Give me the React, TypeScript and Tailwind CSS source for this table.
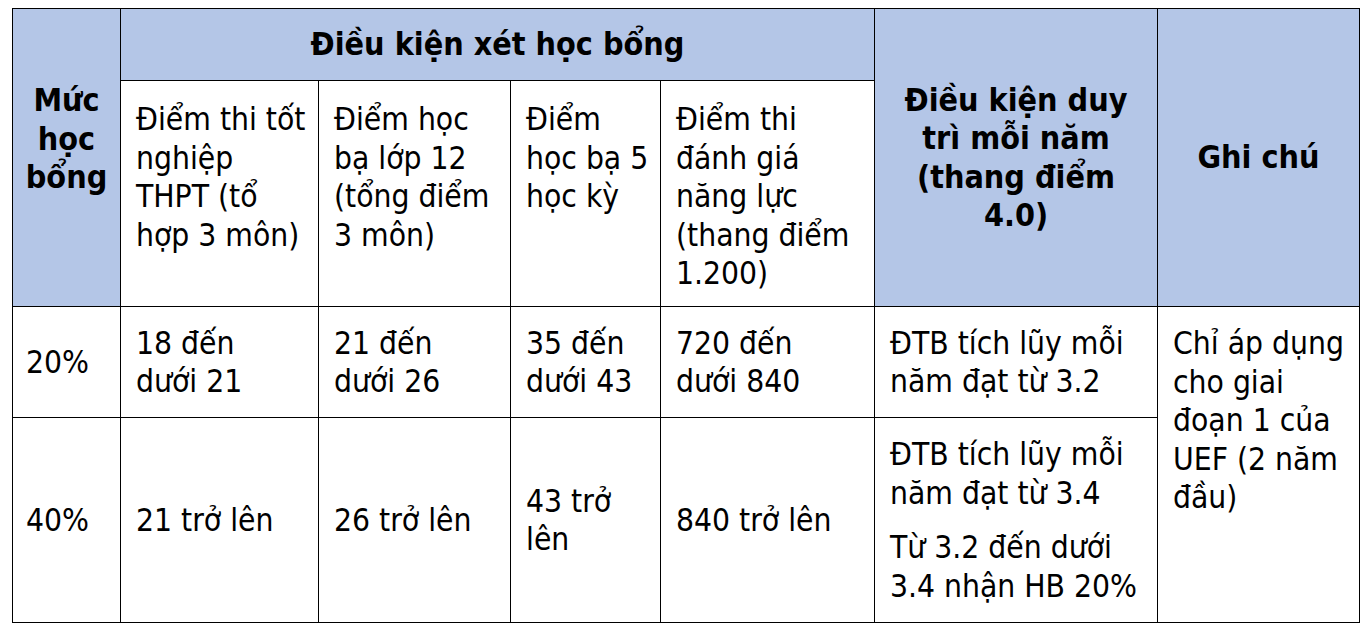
import React from "react";

const F = {
  fontFamily: '"DejaVu Sans Condensed", "DejaVu Sans", Verdana, sans-serif',
};

export default function App() {
  const td = "border border-black align-middle pl-[15px] pr-[4px] text-left whitespace-nowrap";
  const th2 = "border border-black align-top pt-[19px] pl-[15px] pr-[4px] text-left whitespace-nowrap";
  return (
    <div className="w-[1370px] h-[632px] bg-white pt-[8px] pl-[12px]">
      <table
        className="table-fixed border-collapse text-[31.5px] leading-[38.5px] text-black font-stretch-condensed"
        style={{ ...F, width: 1347 }}
      >
        <colgroup>
          <col style={{ width: 108 }} />
          <col style={{ width: 198 }} />
          <col style={{ width: 192 }} />
          <col style={{ width: 150 }} />
          <col style={{ width: 214 }} />
          <col style={{ width: 283 }} />
          <col style={{ width: 202 }} />
        </colgroup>
        <tbody>
          <tr className="h-[72px]">
            <td
              rowSpan={2}
              className="border border-black bg-[#b4c6e7] align-top pt-[72px] text-center font-bold px-0 text-[32px] whitespace-nowrap"
            >
              Mức
              <br />
              học
              <br />
              bổng
            </td>
            <td
              colSpan={4}
              className="border border-black bg-[#b4c6e7] align-middle text-center font-bold text-[32px] whitespace-nowrap"
            >
              Điều kiện xét học bổng
            </td>
            <td
              rowSpan={2}
              className="border border-black bg-[#b4c6e7] align-middle text-center font-bold px-[8px] text-[32px] whitespace-nowrap"
            >
              Điều kiện duy
              <br />
              trì mỗi năm
              <br />
              (thang điểm
              <br />
              4.0)
            </td>
            <td
              rowSpan={2}
              className="border border-black bg-[#b4c6e7] align-middle text-center font-bold text-[32px] whitespace-nowrap"
            >
              Ghi chú
            </td>
          </tr>
          <tr className="h-[226px]">
            <td className={th2}>
              Điểm thi tốt
              <br />
              nghiệp
              <br />
              THPT (tổ
              <br />
              hợp 3 môn)
            </td>
            <td className={th2}>
              Điểm học
              <br />
              bạ lớp 12
              <br />
              (tổng điểm
              <br />
              3 môn)
            </td>
            <td className={th2}>
              Điểm
              <br />
              học bạ 5
              <br />
              học kỳ
            </td>
            <td className={th2}>
              Điểm thi
              <br />
              đánh giá
              <br />
              năng lực
              <br />
              (thang điểm
              <br />
              1.200)
            </td>
          </tr>
          <tr className="h-[111px]">
            <td className="border border-black align-middle pl-[13px] pr-0 whitespace-nowrap">20%</td>
            <td className={td}>
              18 đến
              <br />
              dưới 21
            </td>
            <td className={td}>
              21 đến
              <br />
              dưới 26
            </td>
            <td className={td}>
              35 đến
              <br />
              dưới 43
            </td>
            <td className={td}>
              720 đến
              <br />
              dưới 840
            </td>
            <td className={td}>
              ĐTB tích lũy mỗi
              <br />
              năm đạt từ 3.2
            </td>
            <td
              rowSpan={2}
              className="border border-black align-top pt-[17px] pl-[15px] pr-[4px] whitespace-nowrap"
            >
              Chỉ áp dụng
              <br />
              cho giai
              <br />
              đoạn 1 của
              <br />
              UEF (2 năm
              <br />
              đầu)
            </td>
          </tr>
          <tr className="h-[205px]">
            <td className="border border-black align-middle pl-[13px] pr-0 whitespace-nowrap">40%</td>
            <td className={td}>21 trở lên</td>
            <td className={td}>26 trở lên</td>
            <td className={td}>
              43 trở
              <br />
              lên
            </td>
            <td className={td}>840 trở lên</td>
            <td className={td}>
              <div>
                ĐTB tích lũy mỗi
                <br />
                năm đạt từ 3.4
              </div>
              <div className="mt-[16px]">
                Từ 3.2 đến dưới
                <br />
                3.4 nhận HB 20%
              </div>
            </td>
          </tr>
        </tbody>
      </table>
    </div>
  );
}
